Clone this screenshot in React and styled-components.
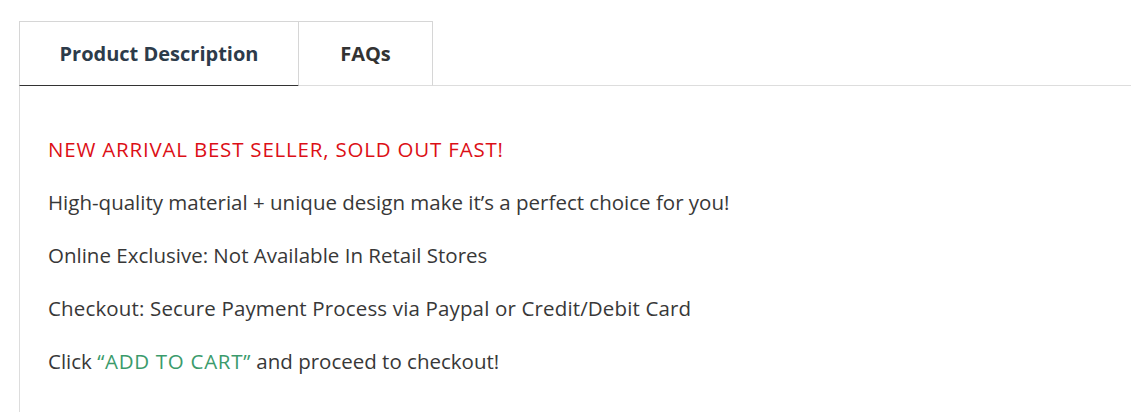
import React from 'react';
import styled, { createGlobalStyle } from 'styled-components';

const Global = createGlobalStyle`
  body {
    margin: 0;
    background: #fff;
    font-family: "Open Sans", "Liberation Sans", sans-serif;
  }
`;

const Wrapper = styled.div`
  padding: 21px 0 0 19px;
`;

const TabBar = styled.div`
  display: flex;
  border-bottom: 1px solid #ddd;
`;

const Tab = styled.div`
  height: 65px;
  display: flex;
  align-items: center;
  justify-content: center;
  width: ${props => props.width}px;
  box-sizing: border-box;
  border: 1px solid #d6d6d6;
  border-bottom: 1px solid ${props => (props.active ? '#333' : 'transparent')};
  margin-bottom: -1px;
  margin-left: ${props => (props.first ? '0' : '-1px')};
  font-size: 20px;
  font-weight: 700;
  color: ${props => (props.active ? '#2d3b4a' : '#333')};
`;

const Panel = styled.div`
  border-left: 1px solid #ddd;
  padding: 49px 0 20px 28px;
  font-size: 20.5px;
  color: #383838;
`;

const Line = styled.p`
  margin: 0 0 25px;
  line-height: 28px;
  color: ${props => props.color || 'inherit'};
  letter-spacing: ${props => props.spacing || 0}px;
`;

const Green = styled.span`
  color: #3b9b6c;
  letter-spacing: 0.7px;
`;

const App = () => {
  return (
    <Wrapper>
      <Global />
      <TabBar>
        <Tab first active width={280}>Product Description</Tab>
        <Tab width={135}>FAQs</Tab>
      </TabBar>
      <Panel>
        <Line color="#dc0f16" spacing={0.8}>NEW ARRIVAL BEST SELLER, SOLD OUT FAST!</Line>
        <Line>High-quality material + unique design make it’s a perfect choice for you!</Line>
        <Line>Online Exclusive: Not Available In Retail Stores</Line>
        <Line spacing={0.15}>Checkout: Secure Payment Process via Paypal or Credit/Debit Card</Line>
        <Line>Click <Green>“ADD TO CART”</Green> and proceed to checkout!</Line>
      </Panel>
    </Wrapper>
  );
};

export default App;
